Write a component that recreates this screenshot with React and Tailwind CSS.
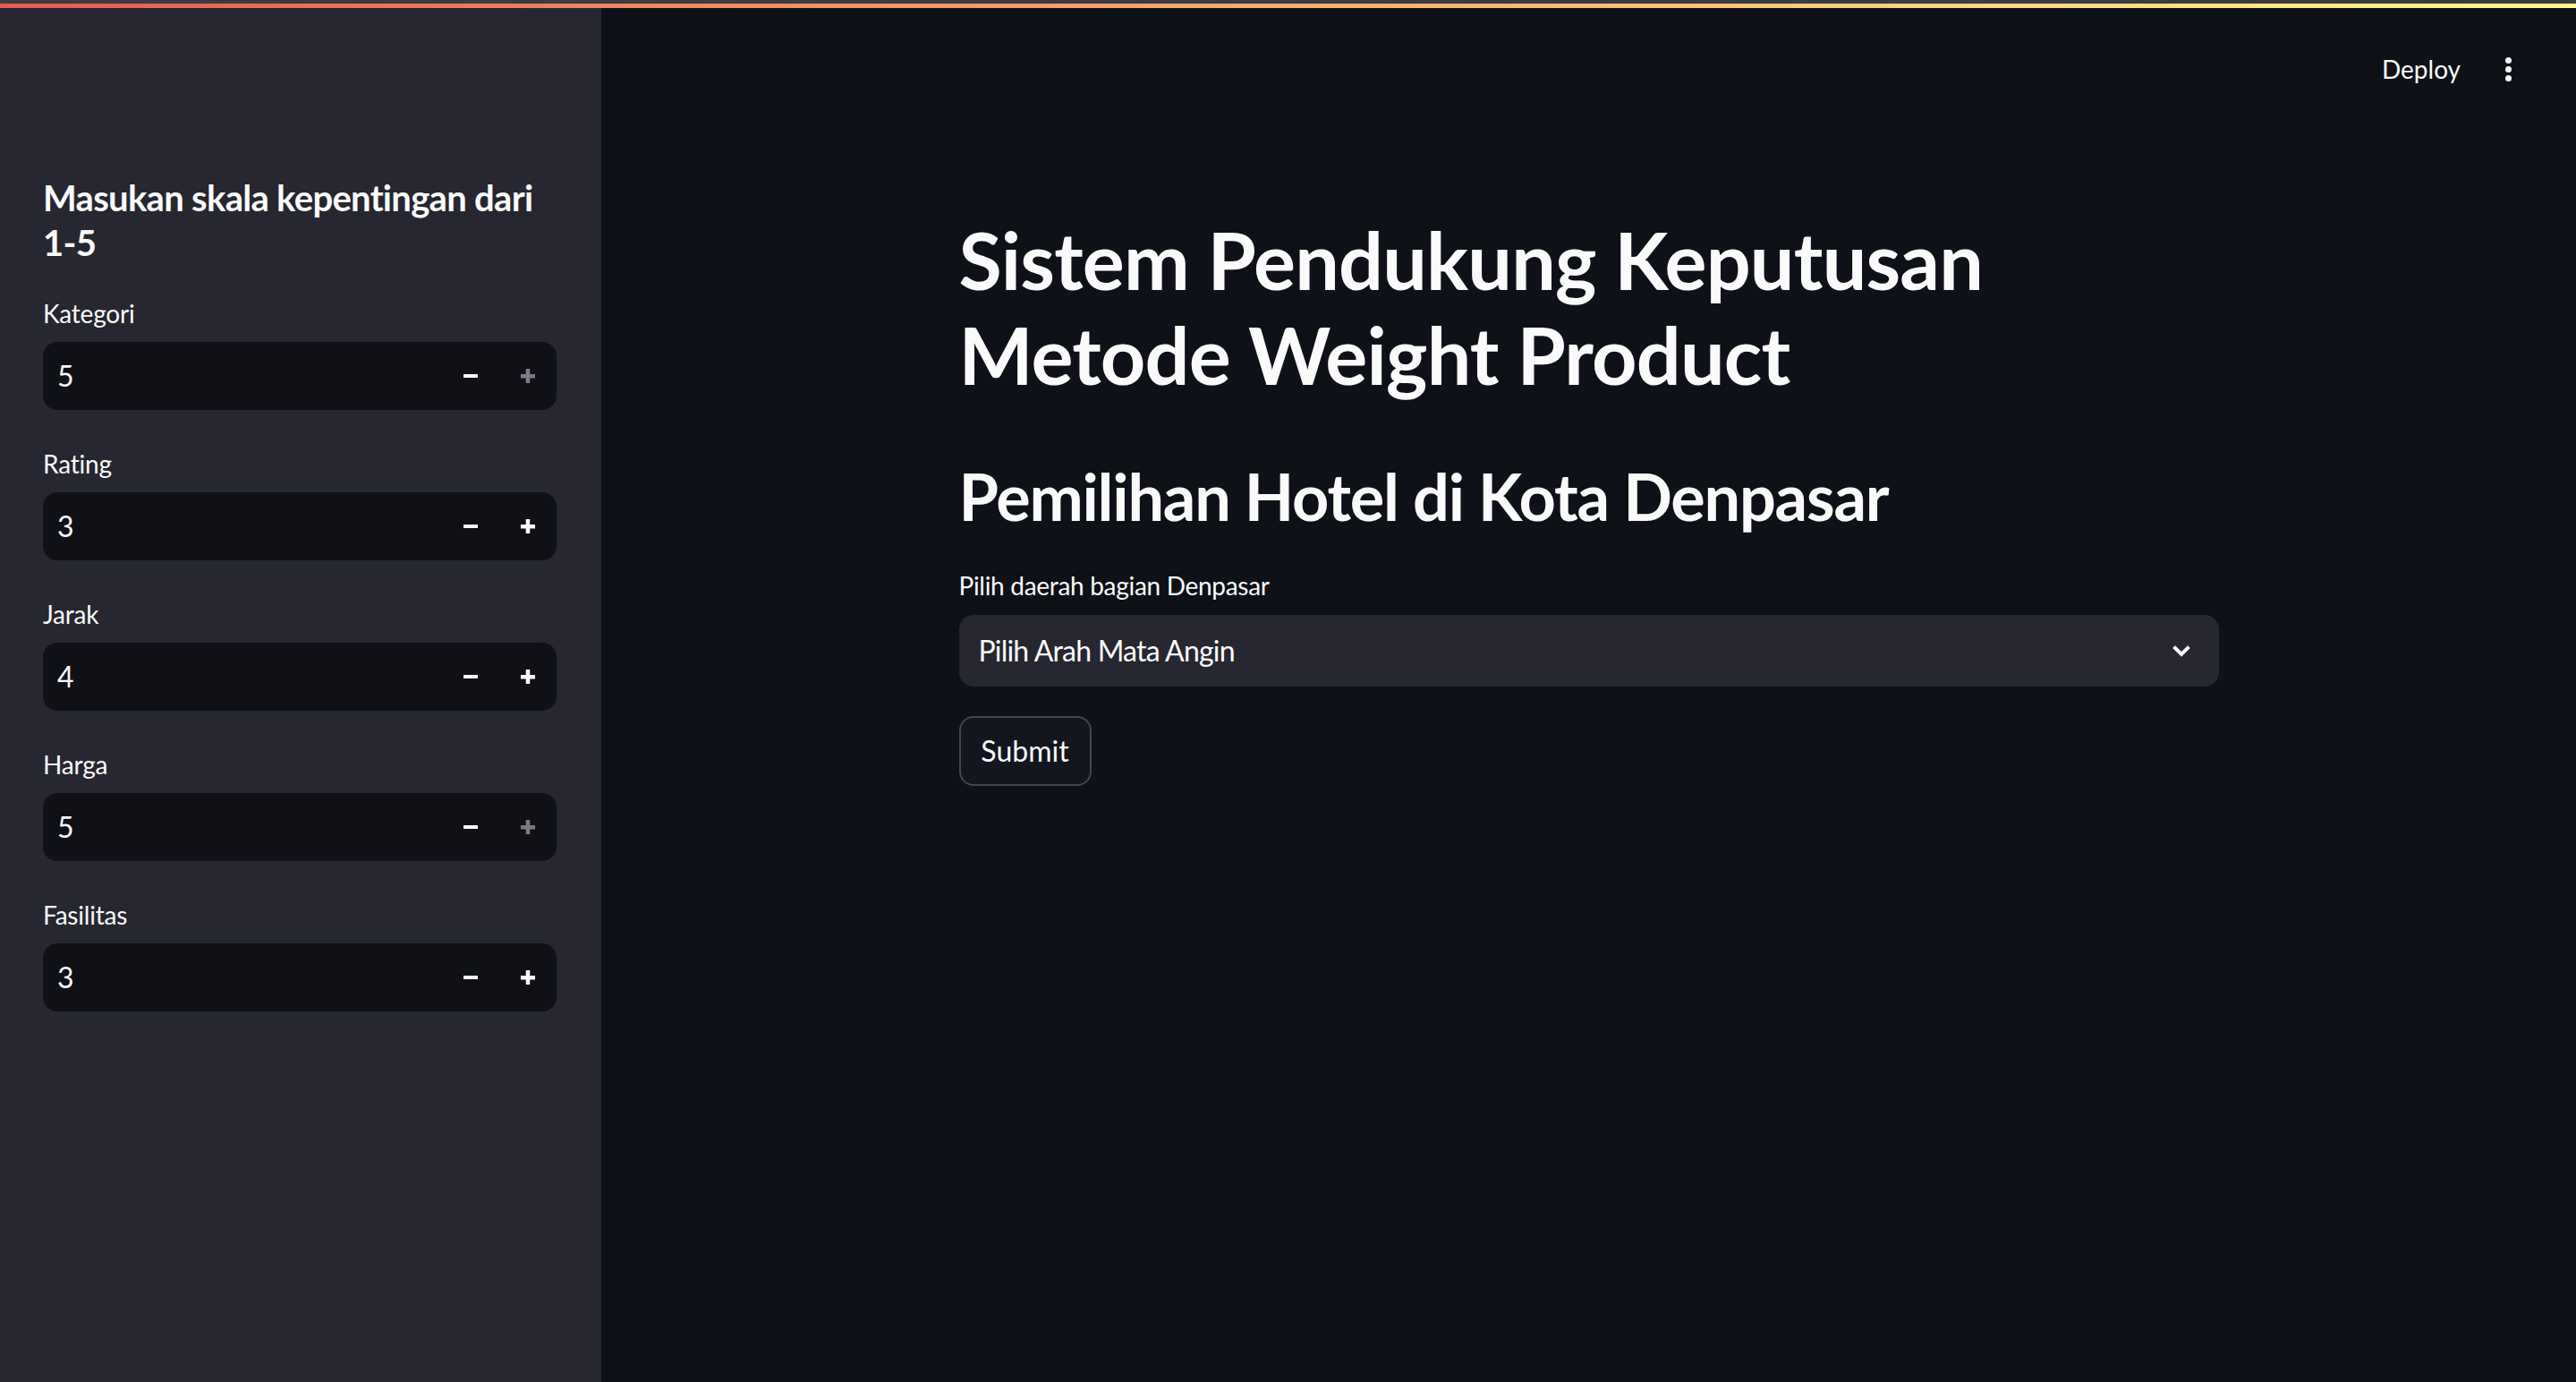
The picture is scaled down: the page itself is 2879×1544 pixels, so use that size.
import React from 'react';

const font = { fontFamily: 'Lato, "Noto Sans", sans-serif' };

const MinusIcon = ({ className }) => (
  <svg className={className} width="16" height="16" viewBox="0 0 16 16" fill="currentColor">
    <rect x="0" y="6" width="16" height="4" />
  </svg>
);

const PlusIcon = ({ className }) => (
  <svg className={className} width="16" height="16" viewBox="0 0 16 16" fill="currentColor">
    <rect x="0" y="6" width="16" height="4.5" />
    <rect x="5.75" y="0" width="4.5" height="16" />
  </svg>
);

const NumberField = ({ label, value, atMax }) => (
  <div className="flex flex-col">
    <label className="h-12 flex items-center text-[28px] text-[#fafafa] tracking-[-0.2px]">{label}</label>
    <div className="mt-2 h-[76px] w-full rounded-2xl bg-[#0f1117] flex items-center">
      <span className="flex-1 pl-[16px] text-[32px] text-[#fafafa]">{value}</span>
      <button className="w-16 h-full flex items-center justify-center text-[#fafafa]">
        <MinusIcon />
      </button>
      <button className={`w-16 h-full flex items-center justify-center ${atMax ? 'text-[#7c7d84]' : 'text-[#fafafa]'}`}>
        <PlusIcon />
      </button>
    </div>
  </div>
);

const fields = [
  { label: 'Kategori', value: 5, atMax: true },
  { label: 'Rating', value: 3 },
  { label: 'Jarak', value: 4 },
  { label: 'Harga', value: 5, atMax: true },
  { label: 'Fasilitas', value: 3 },
];

export default function App() {
  return (
    <div className="h-screen w-full flex flex-col bg-[#0e1117] overflow-hidden" style={font}>
      {/* top strip + decoration gradient */}
      <div className="h-1 w-full bg-[#3a3b42]" />
      <div className="h-[5px] w-full bg-gradient-to-r from-[#e65a52] to-[#fdf98a]" />

      <div className="flex flex-1 min-h-0">
        {/* Sidebar */}
        <aside className="w-[672px] shrink-0 bg-[#262730] pt-[187px] pl-12 pr-[50px]">
          <h2 className="text-[40px] leading-[50px] font-bold text-[#fafafa] tracking-[-0.7px]">
            Masukan skala kepentingan dari 1-5
          </h2>
          <div className="mt-[30px] flex flex-col gap-[36px]">
            {fields.map((f) => (
              <NumberField key={f.label} {...f} />
            ))}
          </div>
        </aside>

        {/* Main */}
        <main className="flex-1 flex flex-col">
          <div className="h-[136px] flex items-center justify-end pr-[72px]">
            <button className="text-[28px] text-[#fafafa]">Deploy</button>
            <div className="ml-[50px] flex flex-col items-center gap-[3px]">
              <span className="w-[7px] h-[7px] rounded-full bg-[#fafafa]" />
              <span className="w-[7px] h-[7px] rounded-full bg-[#fafafa]" />
              <span className="w-[7px] h-[7px] rounded-full bg-[#fafafa]" />
            </div>
          </div>

          <div className="w-[1408px] mx-auto pt-[92px] flex flex-col">
            <h1 className="text-[88px] leading-[106px] font-bold text-[#fafafa] tracking-[-0.8px]">
              Sistem Pendukung Keputusan<br />Metode Weight Product
            </h1>
            <h2 className="mt-[62px] text-[72px] leading-[86px] font-bold text-[#fafafa] tracking-[-1.2px]">
              Pemilihan Hotel di Kota Denpasar
            </h2>

            <label className="mt-[33px] h-12 flex items-center text-[28px] text-[#fafafa] tracking-[-0.3px]">
              Pilih daerah bagian Denpasar
            </label>
            <div className="mt-[9px] h-[80px] rounded-2xl bg-[#262730] flex items-center justify-between pl-[22px] pr-[32px]">
              <span className="text-[32px] text-[#fafafa] tracking-[-0.8px]">Pilih Arah Mata Angin</span>
              <svg width="20" height="13" viewBox="0 0 20 13" fill="none" stroke="#fafafa" strokeWidth="4" strokeLinecap="square">
                <path d="M3 3l7 7 7-7" />
              </svg>
            </div>

            <div className="mt-[33px]">
              <button className="h-[78px] w-[148px] rounded-2xl border-2 border-[#45464d] bg-[#13161e] text-[32px] text-[#fafafa]">
                Submit
              </button>
            </div>
          </div>
        </main>
      </div>
    </div>
  );
}
